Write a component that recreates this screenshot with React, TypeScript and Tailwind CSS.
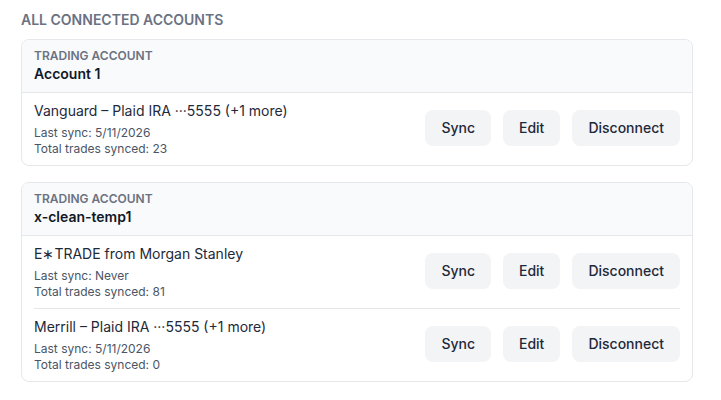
import React from "react";

type Connection = {
  name: string;
  lastSync: string;
  trades: number;
};

type Account = {
  name: string;
  connections: Connection[];
};

const ACCOUNTS: Account[] = [
  {
    name: "Account 1",
    connections: [
      { name: "Vanguard – Plaid IRA ···5555 (+1 more)", lastSync: "5/11/2026", trades: 23 },
    ],
  },
  {
    name: "x-clean-temp1",
    connections: [
      { name: "E∗TRADE from Morgan Stanley", lastSync: "Never", trades: 81 },
      { name: "Merrill – Plaid IRA ···5555 (+1 more)", lastSync: "5/11/2026", trades: 0 },
    ],
  },
];

const btn =
  "h-9 rounded-lg bg-gray-100 px-4 text-sm font-medium text-gray-800 hover:bg-gray-200";

const ConnectionRow: React.FC<{ c: Connection; last: boolean }> = ({ c, last }) => (
  <div
    className={`flex items-center justify-between py-2 ${
      last ? "" : "border-b border-gray-200"
    }`}
  >
    <div>
      <div className="text-sm leading-5 font-normal text-gray-800">{c.name}</div>
      <div className="mt-1 text-xs text-gray-600">Last sync: {c.lastSync}</div>
      <div className="text-xs text-gray-600">Total trades synced: {c.trades}</div>
    </div>
    <div className="mb-[3px] flex gap-3">
      <button className={btn}>Sync</button>
      <button className={btn}>Edit</button>
      <button className={btn}>Disconnect</button>
    </div>
  </div>
);

const App: React.FC = () => {
  return (
    <div
      className="min-h-screen bg-white pl-[21px] pt-[10px]"
      style={{ fontFamily: "Inter, 'Noto Sans', sans-serif" }}
    >
      <div className="w-[672px]">
        <h2 className="mb-[9px] text-sm leading-5 font-semibold uppercase text-gray-500">
          All connected accounts
        </h2>
        <div className="flex flex-col gap-4">
          {ACCOUNTS.map((a) => (
            <div key={a.name} className="overflow-hidden rounded-lg border border-gray-200">
              <div className="border-b border-gray-200 bg-gray-50 px-3 py-2">
                <div className="text-xs font-semibold uppercase text-gray-500">
                  Trading account
                </div>
                <div className="text-sm font-semibold text-gray-900">{a.name}</div>
              </div>
              <div className="px-3">
                {a.connections.map((c, i) => (
                  <ConnectionRow key={c.name} c={c} last={i === a.connections.length - 1} />
                ))}
              </div>
            </div>
          ))}
        </div>
      </div>
    </div>
  );
};

export default App;
